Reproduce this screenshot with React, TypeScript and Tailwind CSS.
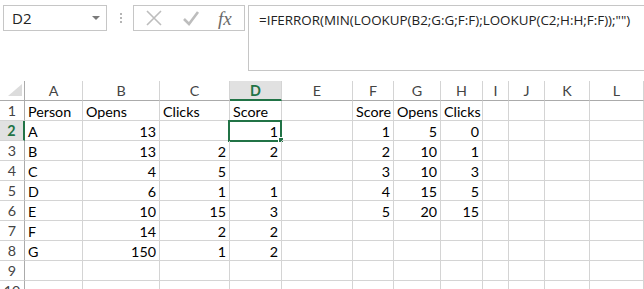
import React from 'react';

type Cell = string | number;

const cols = ['A', 'B', 'C', 'D', 'E', 'F', 'G', 'H', 'I', 'J', 'K', 'L'];

const data: Cell[][] = [
  ['Person', 'Opens', 'Clicks', 'Score', '', 'Score', 'Opens', 'Clicks'],
  ['A', 13, '', 1, '', 1, 5, 0],
  ['B', 13, 2, 2, '', 2, 10, 1],
  ['C', 4, 5, '', '', 3, 10, 3],
  ['D', 6, 1, 1, '', 4, 15, 5],
  ['E', 10, 15, 3, '', 5, 20, 15],
  ['F', 14, 2, 2],
  ['G', 150, 1, 2],
  [],
  [],
];

const font = { fontFamily: 'Lato, "Liberation Sans", sans-serif' };

const NameBox = () => (
  <div className="ml-[3px] flex h-[26px] w-[104px] shrink-0 items-center justify-between border border-[#c6c6c6] pl-[8px] pr-[6px]">
    <span className="text-[15px] text-[#222]" style={{ fontFamily: '"Open Sans", sans-serif' }}>
      D2
    </span>
    <svg width="8" height="5" viewBox="0 0 8 5">
      <path d="M0 0 L8 0 L4 4 Z" fill="#7a7a7a" />
    </svg>
  </div>
);

const Toolbar = () => (
  <div className="flex h-[81px] items-start pt-[5px]">
    <NameBox />
    <div className="ml-[13px] mt-[8px] flex shrink-0 flex-col gap-[2px]">
      <div className="h-[2px] w-[2px] bg-[#b5b5b5]" />
      <div className="h-[2px] w-[2px] bg-[#b5b5b5]" />
      <div className="h-[2px] w-[2px] bg-[#b5b5b5]" />
    </div>
    <div className="ml-[11px] flex h-[26px] w-[112px] shrink-0 items-center border border-[#c6c6c6] pl-[11px]">
      <svg width="18" height="18" viewBox="0 0 18 18">
        <path d="M2 2 L16 16 M16 2 L2 16" stroke="#bdbdbd" strokeWidth="1.6" />
      </svg>
      <svg width="18" height="18" viewBox="0 0 18 18" className="ml-[19px]">
        <path d="M2 10 L7 15 L16 3" stroke="#bdbdbd" strokeWidth="2.6" fill="none" />
      </svg>
      <span
        className="ml-[18px] text-[19px] italic leading-none text-[#6a6a6a]"
        style={{ fontFamily: '"Liberation Serif", serif' }}
      >
        fx
      </span>
    </div>
    <div className="ml-[3px] h-[66px] min-w-0 flex-1 overflow-hidden whitespace-nowrap border-y border-l border-[#c6c6c6] pl-[10px] pt-[1px]">
      <span className="text-[13.4px] text-[#222]" style={{ fontFamily: '"Open Sans", sans-serif' }}>
        =IFERROR(MIN(LOOKUP(B2;G:G;F:F);LOOKUP(C2;H:H;F:F));"")
      </span>
    </div>
  </div>
);

const Sheet = () => (
  <div
    className="grid grid-cols-[25px_58px_77px_70px_52px_71px_41px_47px_42px_26px_36px_45px_1fr] auto-rows-[20px] text-[14.3px]"
    style={font}
  >
    <div className="relative border-b border-r border-[#ababab]">
      <svg width="14" height="12" viewBox="0 0 14 12" className="absolute bottom-[4px] right-[2px]">
        <path d="M14 0 L14 12 L0 12 Z" fill="#dcdcdc" />
      </svg>
    </div>
    {cols.map((c) =>
      c === 'D' ? (
        <div
          key={c}
          className="flex items-center justify-center border-b-2 border-r border-b-[#217346] border-r-[#d4d4d4] bg-[#e1e1e1] pt-[1px] font-bold text-[#217346]"
        >
          {c}
        </div>
      ) : (
        <div
          key={c}
          className="flex items-center justify-center border-b border-r border-b-[#ababab] border-r-[#d4d4d4] text-[#444]"
        >
          {c}
        </div>
      )
    )}
    {data.map((row, r) => (
      <React.Fragment key={r}>
        {r === 1 ? (
          <div className="flex items-center justify-center border-b border-r-2 border-b-[#d4d4d4] border-r-[#217346] bg-[#e1e1e1] font-bold text-[#217346]">
            {r + 1}
          </div>
        ) : (
          <div className="flex items-center justify-center border-b border-r border-b-[#d4d4d4] border-r-[#ababab] text-[#444]">
            {r + 1}
          </div>
        )}
        {cols.map((c, i) => {
          const v = row[i];
          const isNum = typeof v === 'number';
          const selected = r === 1 && c === 'D';
          return (
            <div
              key={c}
              className={`relative flex items-center whitespace-nowrap border-b border-r border-[#d4d4d4] px-[3px] pt-[2px] text-black ${
                isNum ? 'justify-end' : 'justify-start'
              }`}
            >
              {v === undefined ? '' : v}
              {selected && (
                <>
                  <div className="absolute -left-[2px] -top-[1px] h-[22px] w-[54px] border-2 border-[#217346]" />
                  <div className="absolute -bottom-[3px] -right-[3px] h-[6px] w-[6px] border border-white bg-[#217346]" />
                </>
              )}
            </div>
          );
        })}
      </React.Fragment>
    ))}
  </div>
);

export default function App() {
  return (
    <div className="h-[289px] w-[644px] overflow-hidden bg-white">
      <Toolbar />
      <Sheet />
    </div>
  );
}
